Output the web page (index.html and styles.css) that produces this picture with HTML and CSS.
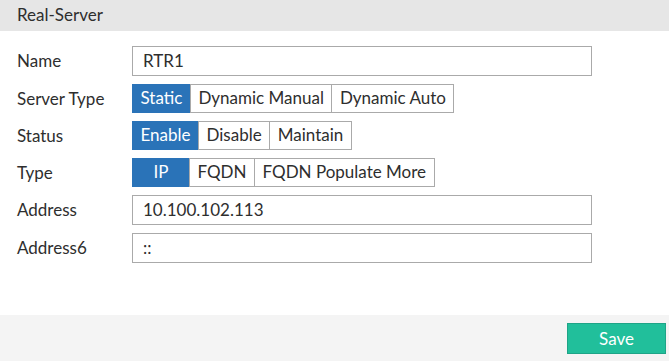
FILE: index.html
```html
<!DOCTYPE html>
<html>
<head>
<meta charset="utf-8">
<link rel="stylesheet" href="styles.css">
</head>
<body>
<div class="page">
  <div class="header">Real-Server</div>
  <div class="form">
    <div class="label">Name</div>
    <div class="input">RTR1</div>
    <div class="label">Server Type</div>
    <div class="seg">
      <span class="btn active">Static</span><span class="btn">Dynamic Manual</span><span class="btn">Dynamic Auto</span>
    </div>
    <div class="label">Status</div>
    <div class="seg">
      <span class="btn active">Enable</span><span class="btn">Disable</span><span class="btn">Maintain</span>
    </div>
    <div class="label">Type</div>
    <div class="seg">
      <span class="btn active">IP</span><span class="btn">FQDN</span><span class="btn">FQDN Populate More</span>
    </div>
    <div class="label">Address</div>
    <div class="input">10.100.102.113</div>
    <div class="label">Address6</div>
    <div class="input">::</div>
  </div>
  <div class="footer">
    <button class="save">Save</button>
  </div>
</div>
</body>
</html>
```
FILE: styles.css
```css
html, body {
  margin: 0;
  padding: 0;
  background: #ffffff;
}
body {
  font-family: Lato, "Open Sans", sans-serif;
  font-size: 17px;
  color: #2e2e2e;
}
.page {
  display: flex;
  flex-direction: column;
  height: 361px;
}
.header {
  height: 31px;
  line-height: 30px;
  background: #e6e6e6;
  padding-left: 17px;
}
.form {
  flex: 1;
  display: grid;
  grid-template-columns: 115px 460px;
  grid-auto-rows: min-content;
  row-gap: 8px;
  padding: 15px 0 0 17px;
  align-items: center;
}
.label {
  line-height: 20px;
}
.input {
  box-sizing: border-box;
  height: 30px;
  border: 1px solid #aaaaaa;
  padding: 0 10px;
  line-height: 27px;
  background: #fff;
}
.seg {
  display: flex;
  height: 29px;
}
.btn {
  box-sizing: border-box;
  height: 29px;
  min-width: 58px;
  padding: 0 7.5px;
  border: 1px solid #aaaaaa;
  margin-left: -1px;
  line-height: 26px;
  text-align: center;
  background: #fff;
}
.btn:first-child {
  margin-left: 0;
}
.btn.active {
  background: #2a73b8;
  border-color: #2a73b8;
  color: #ffffff;
}
.footer {
  height: 46px;
  background: #f4f4f4;
  display: flex;
  justify-content: flex-end;
  align-items: flex-start;
  padding: 8px 3px 0 0;
  box-sizing: border-box;
}
.save {
  width: 99px;
  height: 31px;
  background: #21bf9b;
  border: 1px solid #1ea487;
  color: #ffffff;
  font-family: Lato, "Open Sans", sans-serif;
  font-size: 17px;
  padding: 0;
}
```
